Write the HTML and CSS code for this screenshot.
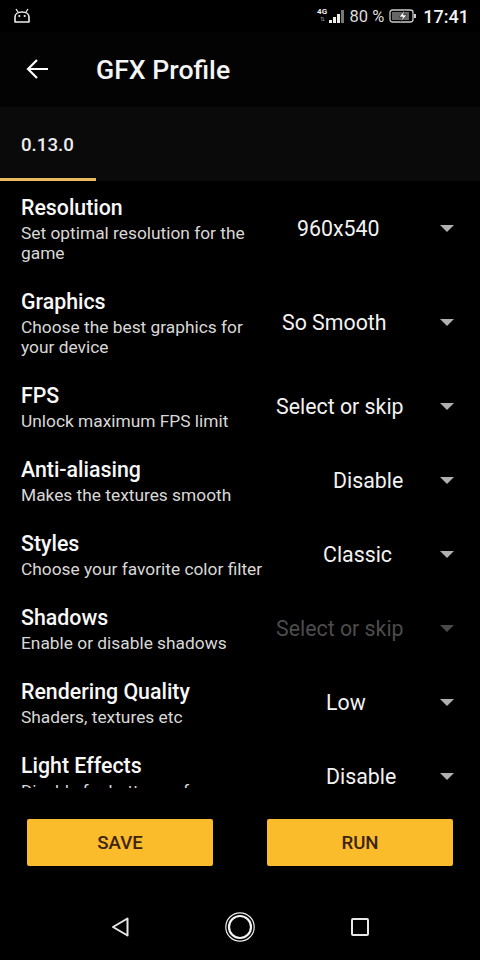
FILE: index.html
```html
<!DOCTYPE html>
<html lang="en">
<head>
<meta charset="utf-8">
<title>GFX Profile</title>
<link rel="stylesheet" href="styles.css">
</head>
<body>
<div class="screen">
  <header class="status">
    <svg class="robot" viewBox="0 0 18 16" width="18" height="16"><path d="M3 1l2 3M15 1l-2 3" stroke="#eee" stroke-width="1.3" fill="none"/><path d="M2 14V9c0-3 3-5 7-5s7 2 7 5v5z" fill="none" stroke="#eee" stroke-width="1.6" stroke-linejoin="round"/><circle cx="6.3" cy="8" r="1.1" fill="#eee"/><circle cx="11.7" cy="8" r="1.1" fill="#eee"/></svg>
    <div class="status-right">
      <span class="net"><span class="net-4g">4G</span><span class="net-arrows">⇅</span></span>
      <span class="bars"><i class="b1"></i><i class="b2"></i><i class="b3"></i><i class="b4"></i></span>
      <span class="pct">80 %</span>
      <svg class="batt" viewBox="0 0 28 14" width="28" height="14"><rect x="1" y="1" width="23" height="12" rx="2.5" fill="none" stroke="#ccc" stroke-width="1.3"/><rect x="3" y="3" width="17" height="8" fill="#666"/><rect x="25" y="5" width="2" height="4" fill="#ccc"/><path d="M15.5 1.5L10 8h3.5l-1.5 4.5L18 6h-3.5z" fill="#fff" stroke="#000" stroke-width=".5"/></svg>
      <span class="clock">17:41</span>
    </div>
  </header>
  <div class="appbar">
    <svg class="back" viewBox="0 0 24 24" width="24" height="24"><path d="M23 12H3M12 3l-9 9 9 9" fill="none" stroke="#fff" stroke-width="2.2"/></svg>
    <h1>GFX Profile</h1>
  </div>
  <nav class="tabs">
    <div class="tab">0.13.0</div>
  </nav>
  <main class="list">
    <section class="row two">
      <div class="info"><h2>Resolution</h2><p>Set optimal resolution for the game</p></div>
      <div class="spinner"><span class="value v-res">960x540</span><span class="arrow"></span></div>
    </section>
    <section class="row two">
      <div class="info"><h2>Graphics</h2><p>Choose the best graphics for your device</p></div>
      <div class="spinner"><span class="value v-gfx">So Smooth</span><span class="arrow"></span></div>
    </section>
    <section class="row">
      <div class="info"><h2>FPS</h2><p>Unlock maximum FPS limit</p></div>
      <div class="spinner"><span class="value">Select or skip</span><span class="arrow"></span></div>
    </section>
    <section class="row">
      <div class="info"><h2>Anti-aliasing</h2><p>Makes the textures smooth</p></div>
      <div class="spinner"><span class="value v-aa">Disable</span><span class="arrow"></span></div>
    </section>
    <section class="row">
      <div class="info"><h2>Styles</h2><p>Choose your favorite color filter</p></div>
      <div class="spinner"><span class="value v-style">Classic</span><span class="arrow"></span></div>
    </section>
    <section class="row off">
      <div class="info"><h2>Shadows</h2><p>Enable or disable shadows</p></div>
      <div class="spinner"><span class="value">Select or skip</span><span class="arrow"></span></div>
    </section>
    <section class="row">
      <div class="info"><h2>Rendering Quality</h2><p>Shaders, textures etc</p></div>
      <div class="spinner"><span class="value v-low">Low</span><span class="arrow"></span></div>
    </section>
    <section class="row">
      <div class="info"><h2>Light Effects</h2><p>Disable for better performance</p></div>
      <div class="spinner"><span class="value v-low">Disable</span><span class="arrow"></span></div>
    </section>
  </main>
  <div class="actions">
    <button class="btn">SAVE</button>
    <button class="btn">RUN</button>
  </div>
  <footer class="navbar">
    <svg viewBox="0 0 20 24" width="20" height="24"><path d="M17.5 3.5v17L3 12z" fill="none" stroke="#e8e8e8" stroke-width="2" stroke-linejoin="round"/></svg>
    <svg viewBox="0 0 32 32" width="32" height="32"><circle cx="16" cy="16" r="14.2" fill="none" stroke="#eee" stroke-width="1.2"/><circle cx="16" cy="16" r="11" fill="none" stroke="#f4f4f4" stroke-width="2.2"/></svg>
    <svg viewBox="0 0 20 20" width="20" height="20"><rect x="2" y="2" width="16" height="16" rx="1" fill="none" stroke="#e8e8e8" stroke-width="2"/></svg>
  </footer>
</div>
</body>
</html>
```
FILE: styles.css
```css
* { box-sizing: border-box; margin: 0; padding: 0; }
html, body { background: #000; }
body { font-family: Roboto, "Liberation Sans", sans-serif; color: #fff; }
.screen { width: 480px; height: 960px; display: flex; flex-direction: column; overflow: hidden; background: #000; }

.status { height: 32px; flex: none; display: flex; align-items: center; justify-content: space-between; padding: 0 11px 0 13px; }
.status-right { display: flex; align-items: center; color: #ddd; }
.net { display: flex; flex-direction: column; align-items: center; line-height: 7px; width: 11px; margin-top: -2px; }
.net-4g { font-size: 8px; font-weight: 700; color: #eee; }
.net-arrows { font-size: 6px; color: #999; }
.bars { display: flex; align-items: flex-end; gap: 1px; height: 13px; margin: 0 6px 0 1px; }
.bars i { display: block; width: 3px; background: #eee; }
.bars .b1 { height: 3px; }
.bars .b2 { height: 6px; }
.bars .b3 { height: 9px; }
.bars .b4 { height: 13px; background: #777; }
.pct { font-size: 16.5px; margin-right: 5px; color: #ddd; }
.batt { margin-right: 6px; }
.clock { font-size: 18px; font-weight: 500; color: #f2f2f2; }

.appbar { height: 75px; flex: none; display: flex; align-items: center; padding: 0 0 0 25px; background: #030303; }
.back { margin-top: -1px; }
.appbar h1 { font-size: 26.67px; font-weight: 500; margin-left: 47px; margin-top: 1px; color: #f5f5f5; }

.tabs { height: 74px; flex: none; background: #0a0a0a; }
.tab { width: 96px; height: 74px; padding: 28px 0 0 21px; font-size: 18.67px; line-height: 21px; font-weight: 500; color: #eee; border-bottom: 3px solid #e8bb5e; }

.list { height: 607px; flex: none; overflow: hidden; padding-top: 13px; }
.row { display: flex; height: 74px; align-items: flex-start; padding-left: 21px; }
.row.two { height: 94px; }
.info { width: 255px; flex: none; padding-top: 1px; }
.info h2 { font-size: 21.33px; line-height: 26px; font-weight: 500; color: #f8f8f8; }
.info p { font-size: 17.33px; line-height: 20px; color: #d8d8d8; padding-right: 8px; margin-top: 2px; }
.spinner { flex: 1; display: flex; align-items: center; height: 100%; padding: 0 26px 24px 0; }
.value { font-size: 21.33px; line-height: 24px; color: #f2f2f2; white-space: nowrap; margin-right: auto; }
.arrow { width: 0; height: 0; margin-bottom: 2px; border-left: 7px solid transparent; border-right: 7px solid transparent; border-top: 7px solid #b0b0b0; flex: none; }
.v-res { margin-left: 21px; }
.v-gfx { margin-left: 6px; }
.v-aa { margin-left: 57px; }
.v-style { margin-left: 47px; }
.v-low { margin-left: 50px; }
.row.off .value { color: #4c4c4c; }
.row.off .arrow { border-top-color: #4a4a4a; }

.actions { flex: none; height: 106px; padding: 31px 27px 0; display: flex; justify-content: space-between; align-items: flex-start; }
.btn { width: 186px; height: 47px; border: none; border-radius: 2px; background: #fbbc2c; color: #3e2410; font-family: inherit; font-size: 18.67px; font-weight: 500; padding-top: 1px; }

.navbar { flex: 1; display: grid; grid-template-columns: repeat(3, 120px); justify-content: center; justify-items: center; align-items: center; }
```
